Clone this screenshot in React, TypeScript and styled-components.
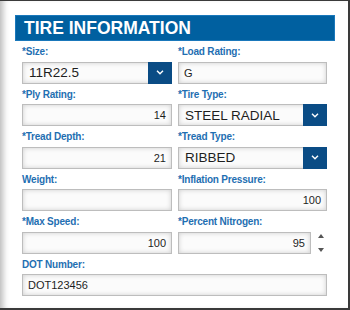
import styled, { createGlobalStyle } from "styled-components";

const Global = createGlobalStyle`
    html, body {
        margin: 0;
        padding: 0;
        background: #ffffff;
    }
    * {
        box-sizing: border-box;
    }
`;

const Frame = styled.div`
    position: relative;
    width: 350px;
    height: 310px;
    background: #ffffff;
    border-top: 1px solid #3a3a3a;
    border-right: 2px solid #3a3a3a;
    border-bottom: 2px solid #3a3a3a;
    box-shadow: inset 7px 0 6px -4px rgba(0, 0, 0, 0.28);
    padding: 14px 0 0 0;
    font-family: "Liberation Sans", Arial, sans-serif;
`;

const Header = styled.h1`
    margin: 0 0 0 15px;
    width: 320px;
    height: 26px;
    background: #0060a0;
    border: 1px solid #1a78bb;
    color: #ffffff;
    font-size: 17.5px;
    font-weight: bold;
    line-height: 24px;
    padding-left: 8px;
`;

const Form = styled.div`
    display: grid;
    grid-template-columns: 150px 149px;
    column-gap: 6px;
    padding-left: 22px;
`;

const Field = styled.div<{ $wide?: boolean }>`
    display: flex;
    flex-direction: column;
    grid-column: ${({ $wide }) => ($wide ? "1 / span 2" : "auto")};
`;

const Label = styled.label`
    height: 20.5px;
    display: flex;
    align-items: center;
    padding-top: 1px;
    color: #1f6fb2;
    font-size: 10px;
    font-weight: bold;
    letter-spacing: -0.2px;
`;

const Box = styled.div<{ $width?: number }>`
    display: flex;
    align-items: stretch;
    height: 22px;
    width: ${({ $width }) => ($width ? `${$width}px` : "100%")};
    border: 1px solid #bdbdbd;
    background: #fbfbfb;
    box-shadow: inset 0 0 5px rgba(0, 0, 0, 0.18);
`;

const Value = styled.span<{ $align?: "left" | "right"; $big?: boolean }>`
    flex: 1;
    display: flex;
    align-items: center;
    justify-content: ${({ $align }) =>
        $align === "right" ? "flex-end" : "flex-start"};
    padding: 0 5px 0 ${({ $big }) => ($big ? "6px" : "5px")};
    font-size: ${({ $big }) => ($big ? "13.5px" : "11px")};
    color: #1e1e1e;
    white-space: nowrap;
`;

const Arrow = styled.span`
    width: 24px;
    display: flex;
    align-items: center;
    justify-content: center;
    background: #0a4c85;
    margin: -1px -1px -1px 0;
`;

const SpinRow = styled.div`
    display: flex;
    align-items: center;
`;

const Spinner = styled.div`
    display: flex;
    flex-direction: column;
    justify-content: space-between;
    height: 18px;
    margin-left: 7px;
`;

const Chevron = () => (
    <svg width="8" height="5" viewBox="0 0 8 5">
        <path d="M1 0.8 L4 3.8 L7 0.8" fill="none" stroke="#ffffff" strokeWidth="1.4" />
    </svg>
);

const Tri = ({ up }: { up?: boolean }) => (
    <svg width="6" height="4" viewBox="0 0 6 4">
        <path d={up ? "M0 4 L3 0 L6 4 Z" : "M0 0 L6 0 L3 4 Z"} fill="#555" />
    </svg>
);

interface FieldDef {
    label: string;
    value: string;
    kind: "select" | "text" | "number" | "spin";
    wide?: boolean;
}

const fields: FieldDef[] = [
    { label: "*Size:", value: "11R22.5", kind: "select" },
    { label: "*Load Rating:", value: "G", kind: "text" },
    { label: "*Ply Rating:", value: "14", kind: "number" },
    { label: "*Tire Type:", value: "STEEL RADIAL", kind: "select" },
    { label: "*Tread Depth:", value: "21", kind: "number" },
    { label: "*Tread Type:", value: "RIBBED", kind: "select" },
    { label: "Weight:", value: "", kind: "text" },
    { label: "*Inflation Pressure:", value: "100", kind: "number" },
    { label: "*Max Speed:", value: "100", kind: "number" },
    { label: "*Percent Nitrogen:", value: "95", kind: "spin" },
    { label: "DOT Number:", value: "DOT123456", kind: "text", wide: true },
];

const Control = ({ f }: { f: FieldDef }) => {
    if (f.kind === "select") {
        return (
            <Box>
                <Value $big>{f.value}</Value>
                <Arrow>
                    <Chevron />
                </Arrow>
            </Box>
        );
    }
    if (f.kind === "spin") {
        return (
            <SpinRow>
                <Box $width={133}>
                    <Value $align="right">{f.value}</Value>
                </Box>
                <Spinner>
                    <Tri up />
                    <Tri />
                </Spinner>
            </SpinRow>
        );
    }
    return (
        <Box>
            <Value $align={f.kind === "number" ? "right" : "left"}>{f.value}</Value>
        </Box>
    );
};

export default function App() {
    return (
        <>
            <Global />
            <Frame>
                <Header>TIRE INFORMATION</Header>
                <Form>
                    {fields.map((f) => (
                        <Field key={f.label} $wide={f.wide}>
                            <Label>{f.label}</Label>
                            <Control f={f} />
                        </Field>
                    ))}
                </Form>
            </Frame>
        </>
    );
}
